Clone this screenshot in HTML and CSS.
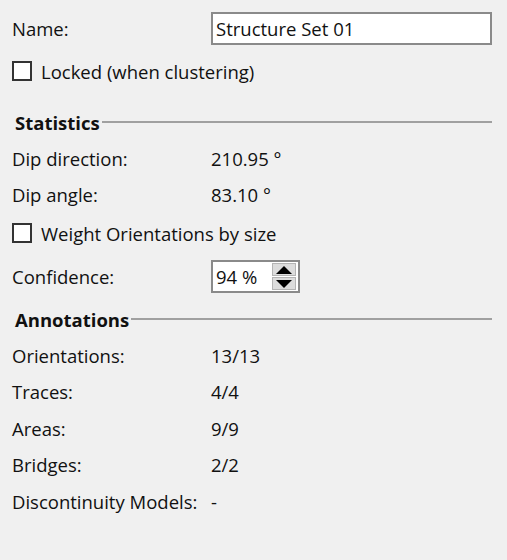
FILE: index.html
```html
<!DOCTYPE html>
<html lang="en">
<head>
  <meta charset="UTF-8">
  <title>Structure Set</title>
  <link rel="stylesheet" href="styles.css">
</head>
<body>
  <div class="panel">
    <div class="row field">
      <span class="label">Name:</span>
      <div class="textbox">Structure Set 01</div>
    </div>
    <label class="row check locked">
      <span class="box"></span>
      <span>Locked (when clustering)</span>
    </label>

    <div class="section stats">
      <span class="title">Statistics</span>
      <span class="rule"></span>
    </div>
    <div class="row"><span class="label">Dip direction:</span><span>210.95 °</span></div>
    <div class="row"><span class="label">Dip angle:</span><span>83.10 °</span></div>
    <label class="row check weight">
      <span class="box"></span>
      <span>Weight Orientations by size</span>
    </label>
    <div class="row field spin-row">
      <span class="label">Confidence:</span>
      <div class="spinbox">
        <span class="spin-value">94 %</span>
        <span class="spin-buttons">
          <span class="spin-btn up"></span>
          <span class="spin-btn down"></span>
        </span>
      </div>
    </div>

    <div class="section notes">
      <span class="title">Annotations</span>
      <span class="rule"></span>
    </div>
    <div class="row"><span class="label">Orientations:</span><span>13/13</span></div>
    <div class="row"><span class="label">Traces:</span><span>4/4</span></div>
    <div class="row"><span class="label">Areas:</span><span>9/9</span></div>
    <div class="row"><span class="label">Bridges:</span><span>2/2</span></div>
    <div class="row"><span class="label">Discontinuity Models:</span><span>-</span></div>
  </div>
</body>
</html>
```

FILE: styles.css
```css
* { margin: 0; padding: 0; box-sizing: border-box; }
html, body {
  height: 100%;
  background: #f0f0f0;
}
body {
  font-family: "Open Sans", "Noto Sans", sans-serif;
  font-size: 18.5px;
  color: #111;
}

.panel {
  display: flex;
  flex-direction: column;
  padding: 12px 15px 0 12px;
}

.row {
  display: flex;
  align-items: center;
  height: 36.5px;
  flex: none;
}
.row .label {
  width: 199px;
  flex: none;
}
.row.field { height: 33px; }

/* vertical spacing between groups */
.locked { margin-top: 8px; }
.stats { margin-top: 14.5px; }
.weight { margin-top: 1.75px; }
.spin-row { margin-top: 8.75px; }
.notes { margin-top: 8px; }

/* text box with a grey frame */
.textbox {
  flex: 1;
  height: 33px;
  border: 2px solid #8a8a8a;
  background: #fff;
  padding: 0 3px;
  display: flex;
  align-items: center;
}

.check { gap: 9px; }
.check .box {
  width: 20px;
  height: 20px;
  border: 2px solid #333;
  background: #fff;
}

.section {
  display: flex;
  align-items: center;
  gap: 2px;
  height: 36px;
  padding-left: 3px;
  flex: none;
}
.section .title {
  font-weight: bold;
}
.section .rule {
  flex: 1;
  height: 2px;
  background: #a0a0a0;
}

/* confidence spin box */
.spinbox {
  width: 89px;
  height: 33px;
  border: 2px solid #8a8a8a;
  background: #fff;
  display: flex;
  align-items: center;
  padding: 0 2px 0 3px;
}
.spin-value { flex: 1; }
.spin-buttons {
  display: flex;
  flex-direction: column;
  gap: 1px;
  width: 24px;
}
.spin-btn {
  height: 13px;
  background: #dcdcdc;
  border: 1px solid #b4b4b4;
  display: flex;
  align-items: center;
  justify-content: center;
}
.spin-btn::after {
  content: "";
  border-left: 8px solid transparent;
  border-right: 8px solid transparent;
}
.spin-btn.up::after { border-bottom: 8px solid #000; }
.spin-btn.down::after { border-top: 8px solid #000; }
```
